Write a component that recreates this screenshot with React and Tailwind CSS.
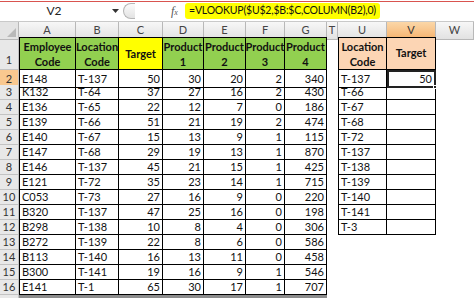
import React from "react";

const GRID = "grid grid-cols-[19px_57px_43px_44px_41px_42px_39px_42px_11px_49px_49px_1fr]";

const rows = [
  ["E148", "T-137", 50, 30, 20, 2, 340],
  ["K132", "T-64", 37, 27, 16, 2, 430],
  ["E136", "T-65", 22, 12, 7, 0, 186],
  ["E139", "T-66", 51, 21, 19, 2, 474],
  ["E140", "T-67", 15, 13, 9, 1, 115],
  ["E147", "T-68", 29, 19, 13, 1, 870],
  ["E146", "T-137", 45, 21, 15, 1, 425],
  ["E121", "T-72", 35, 23, 14, 1, 715],
  ["C053", "T-73", 27, 16, 9, 0, 220],
  ["B320", "T-137", 47, 25, 16, 0, 198],
  ["B298", "T-138", 10, 8, 4, 0, 306],
  ["B272", "T-139", 22, 8, 6, 0, 586],
  ["B113", "T-140", 16, 13, 11, 0, 458],
  ["B300", "T-141", 19, 16, 9, 1, 546],
  ["E141", "T-1", 65, 30, 17, 1, 707],
];

const lookup = ["T-137", "T-66", "T-67", "T-68", "T-72", "T-137", "T-138", "T-139", "T-140", "T-141", "T-3"];

const letters = ["A", "B", "C", "D", "E", "F", "G", "T", "U", "V", "W"];

const App = () => {
  return (
    <div className="w-[474px] h-[298px] overflow-hidden bg-white font-['Lato',sans-serif] text-[11px] text-[#111]">
      {/* formula bar */}
      <div className="relative h-[22px] flex items-center border-b border-[#c9c9c9] bg-white">
        <div className="absolute top-[1px] left-0 right-0 h-px bg-[#d9534f]"></div>
        <div className="w-[108px] shrink-0 text-center text-[12px] text-[#222]">V2</div>
        <div className="w-[14px] shrink-0 flex justify-center">
          <svg width="7" height="4" viewBox="0 0 7 4"><path d="M0 0h7L3.5 4z" fill="#333" /></svg>
        </div>
        <div className="w-[12px] shrink-0 h-[16px] rounded-l-full border border-r-0 border-[#b5b5b5] bg-gradient-to-b from-[#fbfbfb] to-[#e3e3e3] ml-[1px]"></div>
        <div className="w-[36px] shrink-0"></div>
        <div className="w-[14px] shrink-0 italic font-['Liberation_Serif',serif] text-[12px] text-[#555]">f<span className="text-[8px]">x</span></div>
        <div className="h-[16px] shrink-0 bg-[#ffff00] rounded-[3px] flex items-center px-[4px] text-[10.5px] tracking-[-0.2px] text-[#111] whitespace-nowrap">
          =VLOOKUP($U$2,$B:$C,COLUMN(B2),0)
        </div>
      </div>

      {/* column headers */}
      <div className={`${GRID} h-[15px]`}>
        <div className="relative bg-[#e4e4e4] border-r border-b border-[#b8b8b8]">
          <svg className="absolute right-[2px] bottom-[2px]" width="9" height="9" viewBox="0 0 9 9"><path d="M9 0v9H0z" fill="#b9b9b9" /></svg>
        </div>
        {letters.map((l) => (
          <div
            key={l}
            className={`flex items-center justify-center border-r border-b border-[#b8b8b8] text-[11px] ${
              l === "V" ? "bg-gradient-to-b from-[#fbd7a8] to-[#f5b36e] text-[#333]" : "bg-gradient-to-b from-[#f7f7f7] to-[#e2e2e2] text-[#444]"
            }`}
          >
            {l}
          </div>
        ))}
      </div>

      {/* header row 1 */}
      <div className={`${GRID} h-[33px]`}>
        <div className="flex items-end justify-center pb-[1px] bg-[#e8e8e8] border-r border-b border-[#c3c3c3] text-[#333]">1</div>
        {["Employee Code", "Location Code", "Target", "Product 1", "Product 2", "Product 3", "Product 4"].map((h, i) => (
          <div
            key={h}
            className={`flex items-center justify-center text-center font-bold leading-[15px] border-t border-r border-b border-black ${i === 0 ? "border-l" : ""} ${
              i === 2 ? "bg-[#ffff00]" : "bg-[#92d050]"
            }`}
          >
            {h}
          </div>
        ))}
        <div></div>
        <div className="flex items-center justify-center text-center font-bold leading-[15px] bg-[#fcd5b4] border border-black">Location Code</div>
        <div className="flex items-center justify-center font-bold bg-[#fcd5b4] border-t border-r border-b border-black">Target</div>
        <div></div>
      </div>

      {/* data rows */}
      {rows.map((r, idx) => {
        const n = idx + 2;
        const u = lookup[idx];
        return (
          <div key={n} className={`${GRID} h-[15px] leading-[14px]`}>
            <div
              className={`flex items-center justify-center border-r border-b border-[#c3c3c3] text-[#333] ${
                n === 2 ? "bg-[#f9c88f]" : "bg-[#e8e8e8]"
              }`}
            >
              {n}
            </div>
            {r.map((v, i) => (
              <div
                key={i}
                className={`flex items-center border-r border-b border-black px-[2px] ${i === 0 ? "border-l" : ""} ${
                  i < 2 ? "justify-start" : "justify-end"
                }`}
              >
                {v}
              </div>
            ))}
            <div></div>
            {u ? (
              <div className="flex items-center px-[2px] border-l border-r border-b border-black">{u}</div>
            ) : (
              <div></div>
            )}
            {u ? (
              n === 2 ? (
                <div className="relative flex items-center justify-end px-[2px] border-2 border-[#222]">
                  50
                  <div className="absolute right-[-3px] bottom-[-3px] w-[4px] h-[4px] bg-[#222] border border-white"></div>
                </div>
              ) : (
                <div className="border-r border-b border-black"></div>
              )
            ) : (
              <div></div>
            )}
            <div></div>
          </div>
        );
      })}
      <div className={`${GRID} h-[4px]`}>
        <div className="bg-[#e8e8e8] border-r border-[#c3c3c3]"></div>
        <div className="col-span-7 bg-[#8c8c8c]"></div>
      </div>
    </div>
  );
};

export default App;
